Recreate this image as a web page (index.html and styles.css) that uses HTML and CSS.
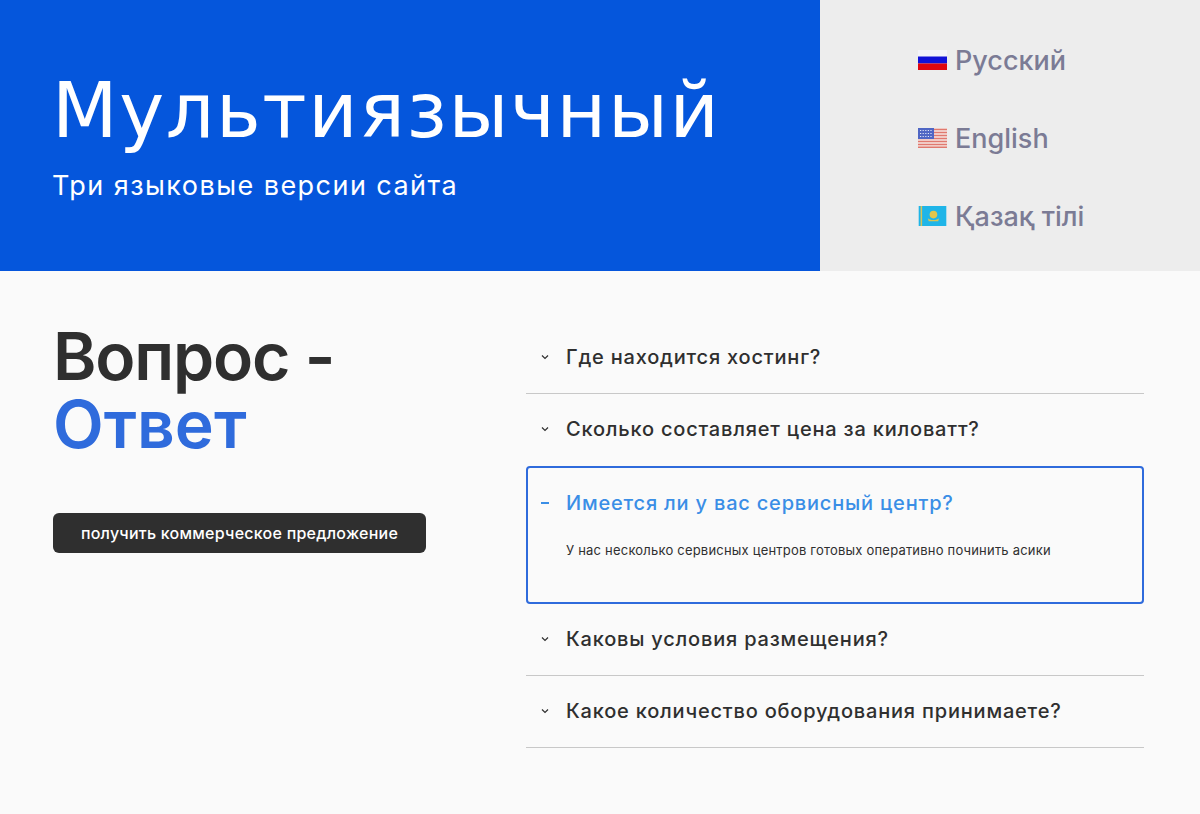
FILE: index.html
```html
<!DOCTYPE html>
<html lang="ru">
<head>
  <meta charset="UTF-8">
  <title>Мультиязычный</title>
  <meta name="viewport" content="width=device-width, initial-scale=1.0">
  <link rel="stylesheet" href="styles.css">
</head>
<body>
  <div class="top">
    <div class="hero">
      <h1>Мультиязычный</h1>
      <p>Три языковые версии сайта</p>
    </div>
    <div class="langs">
      <a href="#" class="lang">
        <svg class="flag" viewBox="0 0 29 20"><rect width="29" height="7" fill="#f4f4fa"/><rect y="6.5" width="29" height="7" fill="#1212d8"/><rect y="13.5" width="29" height="6.5" fill="#e0060f"/></svg>
        Русский
      </a>
      <a href="#" class="lang">
        <svg class="flag" viewBox="0 0 29 20">
          <rect width="29" height="20" fill="#f6e6e2"/>
          <path d="M0 1.5h29M0 4.5h29M0 7.5h29M0 10.5h29M0 13.5h29M0 16.5h29M0 19.3h29" stroke="#e0796f" stroke-width="1.6"/>
          <rect width="16" height="11" fill="#4f66c4"/>
          <path d="M2 2.5h12M2 5.5h12M2 8.5h12" stroke="#dfe4f6" stroke-width="1.2" stroke-dasharray="1.2 1.4"/>
        </svg>
        English
      </a>
      <a href="#" class="lang">
        <svg class="flag" viewBox="0 0 29 21">
          <rect width="29" height="21" fill="#1fb5e8"/>
          <rect x="2" width="1.6" height="21" fill="#d6c45a"/>
          <circle cx="15.5" cy="9" r="4" fill="#e3c64a"/>
          <path d="M9.5 12.5c2 3 10 3 12 0l-1 3.5h-10z" fill="#d9c552"/>
        </svg>
        Қазақ тілі
      </a>
    </div>
  </div>

  <div class="main">
    <div class="intro">
      <h2>Вопрос - <span>Ответ</span></h2>
      <button class="offer-btn">получить коммерческое предложение</button>
    </div>
    <div class="faq">
      <div class="faq-item">
        <div class="faq-head"><svg class="chev" viewBox="0 0 8 6"><path d="M1 1.5l3 3 3-3"/></svg>Где находится хостинг?</div>
      </div>
      <div class="faq-item">
        <div class="faq-head"><svg class="chev" viewBox="0 0 8 6"><path d="M1 1.5l3 3 3-3"/></svg>Сколько составляет цена за киловатт?</div>
      </div>
      <div class="faq-item open">
        <div class="faq-head"><span class="minus"></span>Имеется ли у вас сервисный центр?</div>
        <p class="faq-text">У нас несколько сервисных центров готовых оперативно починить асики</p>
      </div>
      <div class="faq-item">
        <div class="faq-head"><svg class="chev" viewBox="0 0 8 6"><path d="M1 1.5l3 3 3-3"/></svg>Каковы условия размещения?</div>
      </div>
      <div class="faq-item">
        <div class="faq-head"><svg class="chev" viewBox="0 0 8 6"><path d="M1 1.5l3 3 3-3"/></svg>Какое количество оборудования принимаете?</div>
      </div>
    </div>
  </div>
</body>
</html>
```

FILE: styles.css
```css
body {
  margin: 0;
  font-family: 'Inter', 'Noto Sans', sans-serif;
  background: #fafafa;
  color: #2f2f2f;
}

.top {
  display: flex;
  height: 271px;
}

.hero {
  width: 820px;
  box-sizing: border-box;
  padding: 71px 0 0 52px;
  background: #0556dc;
  color: #fff;
}

.hero h1 {
  margin: 0;
  font-family: 'DejaVu Sans', sans-serif;
  font-size: 76px;
  line-height: 80px;
  font-weight: 400;
  letter-spacing: 1.6px;
  white-space: nowrap;
}

.hero p {
  margin: 19px 0 0;
  font-size: 27px;
  line-height: 32px;
  font-weight: 400;
  letter-spacing: 1.45px;
}

.langs {
  flex: 1;
  background: #ededed;
  padding: 41px 0 0 98px;
  display: flex;
  flex-direction: column;
  gap: 40px;
}

.lang {
  display: flex;
  align-items: center;
  gap: 8px;
  height: 38px;
  font-size: 27px;
  font-weight: 500;
  color: #7b7b95;
  text-decoration: none;
}

.flag {
  width: 29px;
  height: 20px;
  filter: blur(0.6px);
}

.main {
  display: flex;
  padding: 51px 56px 0 53px;
}

.intro {
  width: 473px;
  flex-shrink: 0;
}

.intro h2 {
  margin: 0;
  width: 330px;
  font-size: 66px;
  line-height: 68px;
  font-weight: 600;
  letter-spacing: -1.2px;
}

.intro h2 span {
  color: #2f6bdc;
  letter-spacing: 0;
}

.offer-btn {
  display: block;
  margin-top: 55px;
  width: 373px;
  height: 40px;
  border: none;
  border-radius: 6px;
  background: #2f2f2f;
  color: #fff;
  font-family: inherit;
  font-size: 16px;
  font-weight: 500;
  letter-spacing: 0.25px;
  cursor: pointer;
}

.faq {
  flex: 1;
}

.faq-item {
  height: 72px;
  box-sizing: border-box;
  border-bottom: 1px solid #c8c8c8;
}

.faq-item:nth-child(2) {
  border-bottom: none;
}

.faq-head {
  display: flex;
  align-items: center;
  height: 70px;
  padding-left: 15px;
  font-size: 20px;
  font-weight: 500;
  letter-spacing: 0.8px;
  color: #2f2f2f;
}

.chev {
  width: 8px;
  height: 6px;
  margin-right: 17px;
  fill: none;
  stroke: #2f2f2f;
  stroke-width: 1.2;
}

.minus {
  width: 8px;
  height: 1.5px;
  margin-right: 17px;
  background: #3a8ee6;
}

.faq-item.open {
  height: 138px;
  border: 2px solid #2f6bdc;
  border-radius: 4px;
}

.open .faq-head {
  height: 70px;
  padding-left: 13px;
  color: #3a8ee6;
}

.faq-text {
  margin: 3px 0 0;
  padding-left: 38px;
  font-size: 13px;
  line-height: 18px;
  letter-spacing: 0.2px;
  color: #2f2f2f;
}
```
